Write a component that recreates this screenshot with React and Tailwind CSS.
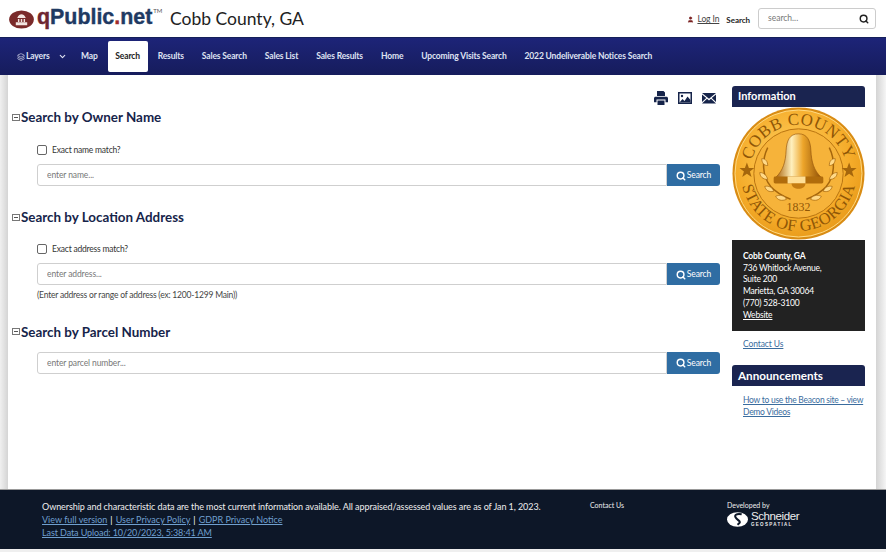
import { ChevronDown, Layers, Search, User } from "lucide-react";

const navItems = ["Map", "Search", "Results", "Sales Search", "Sales List", "Sales Results", "Home", "Upcoming Visits Search", "2022 Undeliverable Notices Search"];

const Seal = () => (
  <svg viewBox="0 0 134 134" className="block h-[133px] w-[133px]">
    <defs>
      <radialGradient id="gold" cx="45%" cy="40%" r="70%">
        <stop offset="0%" stopColor="#ffd263" />
        <stop offset="65%" stopColor="#f5ac2a" />
        <stop offset="100%" stopColor="#e39313" />
      </radialGradient>
      <linearGradient id="bell" x1="0" x2="1" y1="0" y2="0">
        <stop offset="0%" stopColor="#a9620a" />
        <stop offset="35%" stopColor="#fff0bd" />
        <stop offset="60%" stopColor="#eda52a" />
        <stop offset="100%" stopColor="#8f5006" />
      </linearGradient>
      <path id="sealTop" d="M 18 67 A 49 49 0 0 1 116 67" />
      <path id="sealBottom" d="M 9 67 A 58 58 0 0 0 125 67" />
    </defs>
    <circle cx="67" cy="67" r="66.500" fill="#d98c14" />
    <circle cx="67" cy="67" r="64" fill="url(#gold)" stroke="#ffdc86" strokeWidth="1" />
    <circle cx="67" cy="67" r="45" fill="#f6b33a" stroke="#b87410" strokeWidth="1" />
    <text fill="#8f5606" fontSize="17" fontFamily="'Liberation Serif', serif" letterSpacing="0.5">
      <textPath href="#sealTop" startOffset="50%" textAnchor="middle">COBB COUNTY</textPath>
    </text>
    <text fill="#8f5606" fontSize="16.500" fontFamily="'Liberation Serif', serif" letterSpacing="0.3">
      <textPath href="#sealBottom" startOffset="50%" textAnchor="middle">STATE OF GEORGIA</textPath>
    </text>
    <path d="M15 56l2 5.500h5.500l-4.500 3.500 1.700 5.500-4.700-3.300-4.700 3.300 1.700-5.500-4.500-3.500h5.500z" fill="#a5660c" />
    <path d="M119 56l2 5.500h5.500l-4.500 3.500 1.700 5.500-4.700-3.300-4.700 3.300 1.700-5.500-4.500-3.500h5.500z" fill="#a5660c" transform="translate(-1 0)" />
    <path d="M67 27c-9 0-12 7-12.500 17-.5 11-3 20-10.500 27h46c-7.500-7-10-16-10.500-27C79 34 76 27 67 27z" fill="url(#bell)" stroke="#8f5006" strokeWidth="0.600" />
    <rect x="42" y="70" width="50" height="7" rx="1.500" fill="#b06c0c" />
    <rect x="56" y="70" width="18" height="7" fill="#ffdf96" />
    <path d="M60 77h14c0 7-14 7-14 0z" fill="#c47c12" />
    <path d="M36 41c-6 12-6 28 3 39 6 7 13 10 20 13M98 41c6 12 6 28-3 39-6 7-13 10-20 13" fill="none" stroke="#a5660c" strokeWidth="1.500" />
    <path d="M30 52c4 0 6 3 6 7-4 0-6-3-6-7zM28 66c4 0 7 3 8 7-5 0-8-3-8-7zM33 80c4-1 8 1 9 5-5 1-8-1-9-5zM44 90c4-2 9-1 11 3-5 2-9 1-11-3zM104 52c-4 0-6 3-6 7 4 0 6-3 6-7zM106 66c-4 0-7 3-8 7 5 0 8-3 8-7zM101 80c-4-1-8 1-9 5 5 1 8-1 9-5zM90 90c-4-2-9-1-11 3 5 2 9 1 11-3z" fill="#ffd987" stroke="#a5660c" strokeWidth="0.700" />
    <text x="67" y="105" textAnchor="middle" fill="#8f5606" fontSize="12" fontFamily="'Liberation Serif', serif">1832</text>
  </svg>
);

const PrintIcon = () => (
  <svg viewBox="0 0 14 14" className="h-[14px] w-[14px] fill-[#16244a]">
    <path d="M3 0h6.500L11 1.500V5H3zM1.500 5.800h11c.8 0 1.500.7 1.500 1.500v4h-2.500V8.500h-9v2.800H0v-4c0-.8.7-1.500 1.500-1.500zM3.500 9.500h7V14h-7z" />
  </svg>
);

const PictureIcon = () => (
  <svg viewBox="0 0 14 14" className="h-[14px] w-[14px]">
    <rect y="1" width="14" height="12" fill="#16244a" />
    <rect x="1.500" y="2.500" width="11" height="9" fill="#fff" />
    <path d="M1.500 11.500l3-3.500 2 2 3-4.500 3 3.500v2.500z" fill="#16244a" />
    <circle cx="4" cy="5" r="1.200" fill="#16244a" />
  </svg>
);

const EnvelopeIcon = () => (
  <svg viewBox="0 0 14 14" className="h-[14px] w-[14px] fill-[#16244a]">
    <path d="M0 2h14L7 7.800zM0 3.500l4.300 3.600L0 11zM14 3.500L9.700 7.100 14 11zM5 7.800l2 1.700 2-1.700 5 4.700H0z" />
  </svg>
);

const SearchRow = ({ placeholder }) => (
  <div className="flex h-[22px]">
    <input
      placeholder={placeholder}
      className="h-full flex-1 rounded-l-[3px] border border-[#cfcfcf] bg-white pl-[9px] text-[8.500px] tracking-[-0.1px] outline-none placeholder:text-[#777]"
    />
    <button className="flex h-full w-[53px] items-center justify-center gap-[1px] rounded-r-[3px] bg-[#2f6da3] pt-[1px] text-[8.500px] tracking-[-0.1px] text-white">
      <Search size={10} strokeWidth={3.500} />
      Search
    </button>
  </div>
);

const SectionTitle = ({ children }) => (
  <div className="flex items-center gap-[1px]">
    <span className="flex h-[7px] w-[8px] items-center justify-center border border-[#777]">
      <span className="h-px w-[4px] bg-[#555]" />
    </span>
    <h2 className="text-[13.400px] leading-[18px] font-bold text-[#16244a]">{children}</h2>
  </div>
);

const CheckRow = ({ label }) => (
  <label className="mb-[9px] flex h-[11px] items-center gap-[5px] text-[8.500px] tracking-[-0.2px] text-[#333]">
    <input type="checkbox" className="h-[10px] w-[10px] appearance-none rounded-[2px] border border-[#666] bg-white" />
    <span className="mt-[2px]">{label}</span>
  </label>
);

export default function App() {
  return (
    <div className="flex h-[552px] w-[886px] flex-col overflow-hidden bg-white font-['Lato','Open_Sans',sans-serif]">
      <header className="flex h-[37px] items-center">
        <div className="ml-[9px] flex w-[154px] items-center">
          <svg viewBox="0 0 26 20" className="mt-[1px] h-[19px] w-[25px] shrink-0">
            <ellipse cx="13" cy="10" rx="13" ry="9.500" fill="#7a2a2a" />
            <path d="M7 13h12v3H7zM8.500 8.500c1-3 3-4 4.500-4s3.500 1 4.500 4z" fill="#f2e4e0" />
            <path d="M10 9.500v3M13 9.500v3M16 9.500v3" stroke="#f2e4e0" strokeWidth="1.500" />
          </svg>
          <span className="-mt-[1px] ml-[3px] font-['Liberation_Sans',sans-serif] text-[21.400px] leading-none font-bold text-[#1f3a63] [-webkit-text-stroke:0.4px]">
            <span className="text-[#6e2630]">q</span>Public<span className="text-[#a02b2b]">.</span>net
          </span>
          <sup className="-mt-[9px] ml-[1px] text-[6px] text-[#555]">TM</sup>
        </div>
        <span className="ml-[7px] text-[17.500px] leading-none text-[#222]">Cobb County, GA</span>
        <div className="ml-auto mr-[10px] flex items-center">
          <User size={7} className="mt-[2px] fill-[#7a2020] text-[#7a2020]" />
          <a className="ml-[3px] mt-[2px] text-[8.500px] tracking-[-0.1px] text-[#444] underline">Log In</a>
          <span className="ml-[7px] mt-[3px] text-[8px] font-bold tracking-[-0.05px] text-[#222]">Search</span>
          <div className="ml-[8px] flex h-[21px] w-[118px] items-center justify-between rounded-[3px] border border-[#ccc] pl-[9px] pr-[6px] text-[8.500px] text-[#777]">
            search...
            <Search size={10} strokeWidth={3.500} className="text-[#222]" />
          </div>
        </div>
      </header>

      <nav className="flex h-[38px] items-center border-t border-[#15205a] bg-gradient-to-b from-[#1d2478] to-[#161c5c] text-[8.500px] font-bold tracking-[-0.15px] text-[#dfe2f2]">
        <div className="ml-[17px] flex w-[55px] items-center">
          <Layers size={8} className="mr-[1px]" />
          Layers
          <ChevronDown size={9} strokeWidth={3} className="ml-[8px]" />
        </div>
        {navItems.map((item) =>
          item === "Search" ? (
            <span key={item} className="mx-[1px] flex h-[31px] w-[40px] items-center justify-center rounded-[2px] bg-white text-[#222]">
              {item}
            </span>
          ) : (
            <span key={item} className="px-[9px]">{item}</span>
          )
        )}
      </nav>

      <div className="flex h-[414px]">
        <div className="w-[8px] bg-gradient-to-r from-[#f0f0f0] to-[#d4d4d4]" />
        <main className="flex h-full w-[868px] bg-white">
          <div className="w-[712px] pl-[4px]">
            <div className="flex h-[33px] justify-end gap-[10px] pt-[16px] pr-[4px]">
              <PrintIcon />
              <PictureIcon />
              <EnvelopeIcon />
            </div>

            <section>
              <SectionTitle>Search by Owner Name</SectionTitle>
              <div className="mt-[18px] pl-[25px]">
                <CheckRow label="Exact name match?" />
                <SearchRow placeholder="enter name..." />
              </div>
            </section>

            <section className="mt-[22px]">
              <SectionTitle>Search by Location Address</SectionTitle>
              <div className="mt-[17px] pl-[25px]">
                <CheckRow label="Exact address match?" />
                <SearchRow placeholder="enter address..." />
                <p className="mt-[4px] text-[8.500px] tracking-[-0.2px] text-[#444]">(Enter address or range of address (ex: 1200-1299 Main))</p>
              </div>
            </section>

            <section className="mt-[21px]">
              <SectionTitle>Search by Parcel Number</SectionTitle>
              <div className="mt-[11px] pl-[25px]">
                <SearchRow placeholder="enter parcel number..." />
              </div>
            </section>
          </div>

          <aside className="ml-[12px] w-[133px] pt-[11px]">
            <h3 className="flex h-[21px] items-center rounded-t-[3px] bg-[#1a2450] pl-[6px] text-[11px] font-bold text-white">Information</h3>
            <Seal />
            <div className="h-[91px] bg-[#222] pl-[11px] pt-[11px] text-[8.500px] leading-[11.700px] tracking-[-0.2px] text-white">
              <p className="font-bold">Cobb County, GA</p>
              <p>736 Whitlock Avenue,</p>
              <p>Suite 200</p>
              <p>Marietta, GA 30064</p>
              <p>(770) 528-3100</p>
              <a className="underline">Website</a>
            </div>
            <a className="mt-[7px] block pl-[11px] text-[8.500px] leading-[12px] tracking-[-0.1px] text-[#3a6c9e] underline">Contact Us</a>
            <h3 className="mt-[15px] flex h-[21px] items-center rounded-t-[3px] bg-[#1a2450] pl-[6px] text-[11.700px] font-bold text-white">Announcements</h3>
            <a className="mt-[8px] block pl-[11px] text-[8.500px] leading-[12px] tracking-[-0.27px] text-[#3a6c9e] underline">
              How to use the Beacon site – view Demo Videos
            </a>
          </aside>
        </main>
        <div className="w-[10px] bg-gradient-to-r from-[#d4d4d4] to-[#f5f5f5]" />
      </div>

      <footer className="flex h-[60px] border-t border-[#999] bg-[#0d1728] text-[#eee]">
        <div className="ml-[42px] w-[548px] pt-[10px] text-[9px] leading-[13px]">
          <p className="tracking-[-0.07px]">Ownership and characteristic data are the most current information available. All appraised/assessed values are as of Jan 1, 2023.</p>
          <p className="text-[#6f9fcf]">
            <a className="underline">View full version</a>
            <span className="mx-[3px] text-white">|</span>
            <a className="underline">User Privacy Policy</a>
            <span className="mx-[3px] text-white">|</span>
            <a className="underline">GDPR Privacy Notice</a>
          </p>
          <a className="tracking-[-0.1px] text-[#6f9fcf] underline">Last Data Upload: 10/20/2023, 5:38:41 AM</a>
        </div>
        <div className="w-[137px] pt-[10px] text-[7px] leading-[10px]">Contact Us</div>
        <div className="pt-[10px] text-[7px] leading-[10px]">
          Developed by
          <div className="mt-[1px] flex items-center gap-[3px]">
            <svg viewBox="0 0 20 14" className="h-[15px] w-[21px]">
              <ellipse cx="10" cy="7" rx="10" ry="7" fill="#fff" />
              <path d="M14 2C9 1 6 3 9 6s5 3 1 6" fill="none" stroke="#0d1728" strokeWidth="2" />
            </svg>
            <div className="font-['Liberation_Sans',sans-serif]">
              <div className="h-[11px] text-[11.500px] leading-[11px] tracking-[-0.4px]">Schneider</div>
              <div className="h-[5px] text-[4.500px] leading-[5px] font-bold tracking-[1.300px]">GEOSPATIAL</div>
            </div>
          </div>
        </div>
      </footer>
      <div className="h-[3px] bg-[#efefef]" />
    </div>
  );
}
